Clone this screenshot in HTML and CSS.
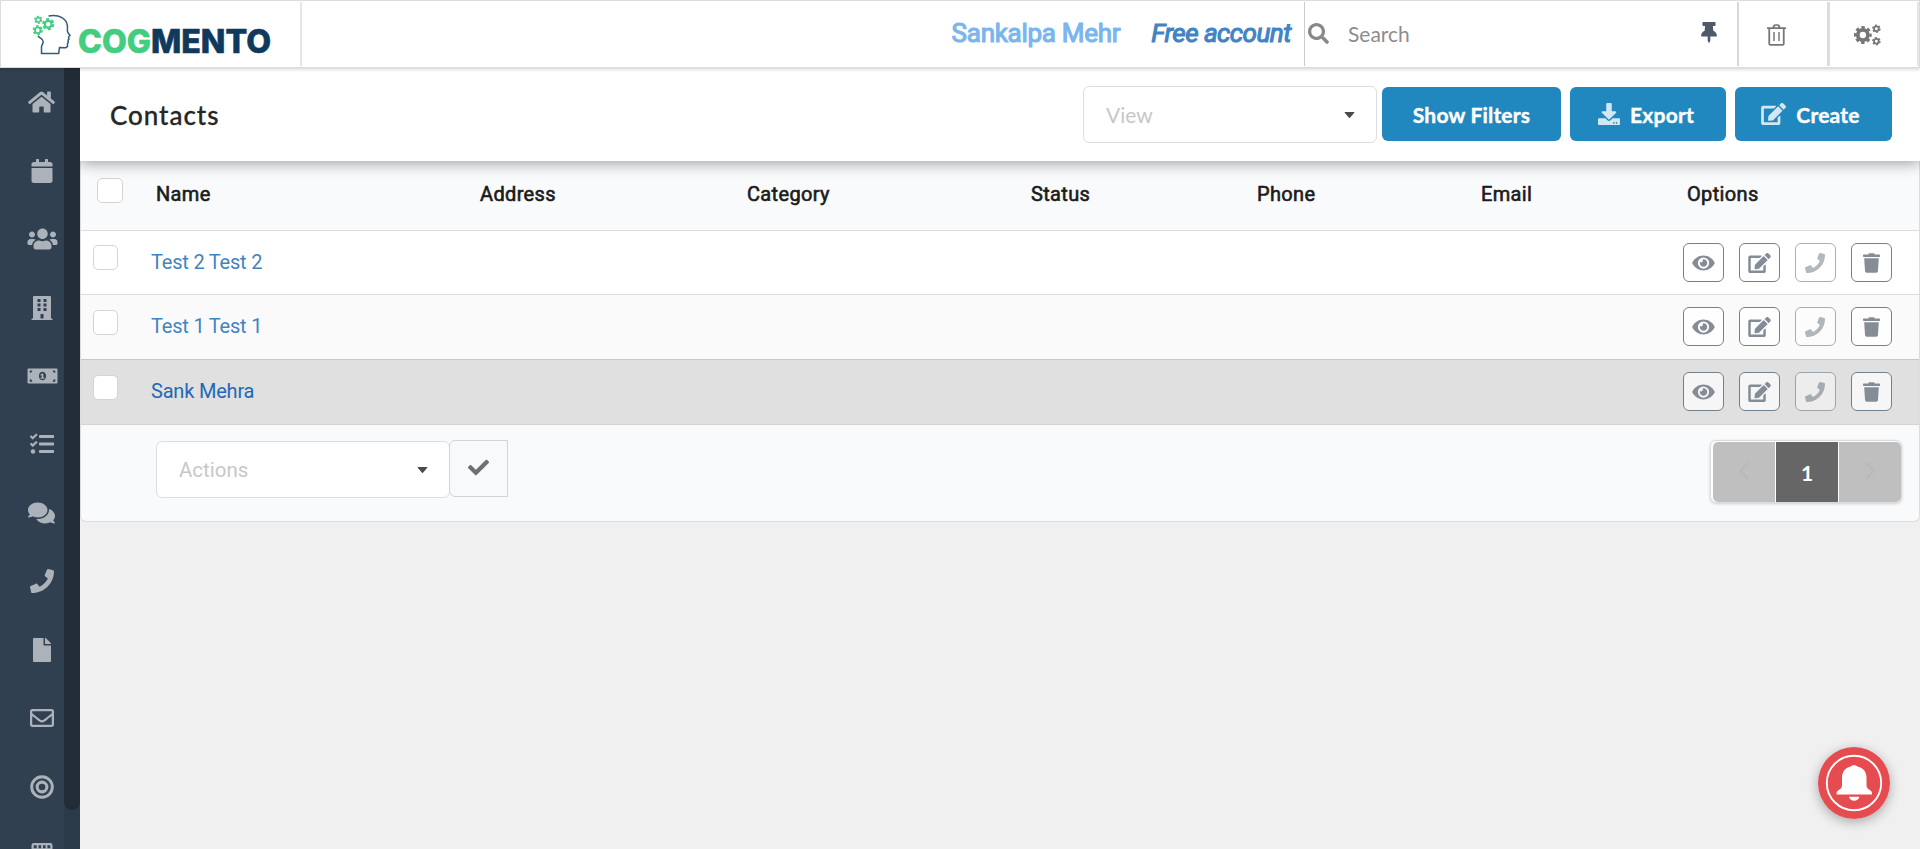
FILE: index.html
```html
<!DOCTYPE html>
<html lang="en">
<head>
<meta charset="utf-8">
<title>Cogmento CRM</title>
<link rel="stylesheet" href="styles.css">
</head>
<body>
<svg class="defs" width="0" height="0">
<symbol id="home" viewBox="0 0 576 512"><path d="M280.37 148.26L96 300.11V464a16 16 0 0 0 16 16l112.06-.29a16 16 0 0 0 15.92-16V368a16 16 0 0 1 16-16h64a16 16 0 0 1 16 16v95.64a16 16 0 0 0 16 16.05L464 480a16 16 0 0 0 16-16V300L295.67 148.26a12.19 12.19 0 0 0-15.3 0zM571.6 251.47L488 182.56V44.05a12 12 0 0 0-12-12h-56a12 12 0 0 0-12 12v72.61L318.47 43a48 48 0 0 0-61 0L4.34 251.47a12 12 0 0 0-1.6 16.9l25.5 31A12 12 0 0 0 45.15 301l235.22-193.74a12.19 12.19 0 0 1 15.3 0L530.9 301a12 12 0 0 0 16.9-1.6l25.5-31a12 12 0 0 0-1.7-16.93z"/></symbol>
<symbol id="calendar" viewBox="0 0 448 512"><path d="M12 192h424c6.6 0 12 5.4 12 12v260c0 26.5-21.5 48-48 48H48c-26.5 0-48-21.5-48-48V204c0-6.600 5.400-12 12-12zm436-44v-36c0-26.500-21.500-48-48-48h-48V12c0-6.600-5.400-12-12-12h-40c-6.600 0-12 5.400-12 12v52H160V12c0-6.600-5.400-12-12-12h-40c-6.600 0-12 5.400-12 12v52H48C21.500 64 0 85.500 0 112v36c0 6.600 5.400 12 12 12h424c6.600 0 12-5.400 12-12z"/></symbol>
<symbol id="users" viewBox="0 0 640 512"><path d="M96 224c35.300 0 64-28.700 64-64s-28.700-64-64-64-64 28.700-64 64 28.700 64 64 64zm448 0c35.300 0 64-28.700 64-64s-28.700-64-64-64-64 28.700-64 64 28.700 64 64 64zm32 32h-64c-17.600 0-33.500 7.100-45.100 18.600 40.300 22.100 68.900 62 75.100 109.400h66c17.700 0 32-14.300 32-32v-32c0-35.300-28.700-64-64-64zm-256 0c61.900 0 112-50.100 112-112S381.900 32 320 32 208 82.100 208 144s50.100 112 112 112zm76.800 32h-8.300c-20.800 10-43.900 16-68.500 16s-47.600-6-68.500-16h-8.300C179.600 288 128 339.600 128 403.200V432c0 26.500 21.500 48 48 48h288c26.500 0 48-21.500 48-48v-28.800c0-63.600-51.600-115.200-115.200-115.200zm-223.700-13.400C161.500 263.100 145.600 256 128 256H64c-35.300 0-64 28.700-64 64v32c0 17.700 14.300 32 32 32h65.900c6.300-47.400 34.900-87.300 75.200-109.400z"/></symbol>
<symbol id="building" viewBox="0 0 448 512"><path fill-rule="evenodd" d="M436 480h-20V24c0-13.300-10.700-24-24-24H56C42.700 0 32 10.700 32 24v456H12c-6.600 0-12 5.400-12 12v20h448v-20c0-6.600-5.400-12-12-12zM128 64h64v64h-64zM128 160h64v64h-64zM128 256h64v64h-64zM256 64h64v64h-64zM256 160h64v64h-64zM256 256h64v64h-64zM192 384h64v96h-64z"/></symbol>
<symbol id="money" viewBox="0 0 640 512"><path fill-rule="evenodd" d="M616 96H24C10.700 96 0 106.700 0 120v272c0 13.300 10.700 24 24 24h592c13.300 0 24-10.700 24-24V120c0-13.300-10.700-24-24-24zM48 136h56q-8 48-56 56zM536 136h56v56q-48-8-56-56zM48 320q48 8 56 56H48zM592 320v56h-56q8-48 56-56zM320 164c44 0 76 40 76 92s-32 92-76 92-76-40-76-92 32-92 76-92zm-8 40l-34 20v24l26-8v50h-24v22h78v-22h-20v-86z"/></symbol>
<symbol id="tasks" viewBox="0 0 512 512"><path d="M139.600 35.500a12 12 0 0 0-17 0L58.900 98.800l-22.700-22.100a12 12 0 0 0-17 0L3.500 92.400a12 12 0 0 0 0 17l47.600 47.400a12.800 12.800 0 0 0 17.600 0l15.600-15.600L156.500 69a12 12 0 0 0 .1-17zm0 159.200a12 12 0 0 0-17 0l-63.700 63.700-22.700-22.100a12 12 0 0 0-17 0L3.500 252a12 12 0 0 0 0 17L51 316.500a12.800 12.800 0 0 0 17.600 0l15.700-15.700 72.200-72.200a12 12 0 0 0 .1-17zM64 368c-26.500 0-48.600 21.500-48.600 48S37.500 464 64 464a48 48 0 0 0 0-96zm432 16H208a16 16 0 0 0-16 16v32a16 16 0 0 0 16 16h288a16 16 0 0 0 16-16v-32a16 16 0 0 0-16-16zm0-320H208a16 16 0 0 0-16 16v32a16 16 0 0 0 16 16h288a16 16 0 0 0 16-16V80a16 16 0 0 0-16-16zm0 160H208a16 16 0 0 0-16 16v32a16 16 0 0 0 16 16h288a16 16 0 0 0 16-16v-32a16 16 0 0 0-16-16z"/></symbol>
<symbol id="comments" viewBox="0 0 576 512"><path d="M416 192c0-88.400-93.100-160-208-160S0 103.600 0 192c0 34.300 14.100 65.900 38 92-13.400 30.200-35.500 54.200-35.800 54.500-2.200 2.300-2.800 5.700-1.500 8.700S4.800 352 8 352c36.600 0 66.900-12.300 88.700-25 32.200 15.700 70.300 25 111.300 25 114.900 0 208-71.600 208-160zm122 220c23.900-26 38-57.700 38-92 0-66.900-53.500-124.200-129.300-148.100.9 6.600 1.300 13.300 1.300 20.100 0 105.900-107.700 192-240 192-10.800 0-21.300-.8-31.700-1.900C207.800 439.600 281.800 480 368 480c41 0 79.100-9.200 111.300-25 21.800 12.700 52.100 25 88.700 25 3.200 0 6.100-1.900 7.300-4.800 1.300-2.900.7-6.300-1.500-8.700-.3-.3-22.400-24.200-35.800-54.500z"/></symbol>
<symbol id="phone" viewBox="0 0 512 512"><path d="M493.400 24.600l-104-24c-11.300-2.600-22.900 3.300-27.500 13.900l-48 112c-4.200 9.800-1.400 21.300 6.900 28l60.600 49.600c-36 76.700-98.900 140.500-177.200 177.200l-49.600-60.600c-6.800-8.300-18.200-11.100-28-6.900l-112 48C3.900 366.500-2 378.100.6 389.400l24 104C27.100 504.200 36.700 512 48 512c256.100 0 464-207.500 464-464 0-11.200-7.700-20.900-18.600-23.400z"/></symbol>
<symbol id="file" viewBox="0 0 384 512"><path d="M224 136V0H24C10.700 0 0 10.700 0 24v464c0 13.300 10.700 24 24 24h336c13.300 0 24-10.700 24-24V160H248c-13.200 0-24-10.800-24-24zm160-14.100v6.100H256V0h6.100c6.400 0 12.500 2.500 17 7l97.900 98c4.500 4.500 7 10.600 7 16.900z"/></symbol>
<symbol id="mail" viewBox="0 0 512 512"><path d="M464 64H48C21.490 64 0 85.490 0 112v288c0 26.510 21.490 48 48 48h416c26.510 0 48-21.490 48-48V112c0-26.510-21.490-48-48-48zm0 48v40.805c-22.422 18.259-58.168 46.651-134.587 106.490-16.841 13.247-50.201 45.072-73.413 44.701-23.208.375-56.579-31.459-73.413-44.701C106.180 199.465 70.425 171.067 48 152.805V112h416zM48 400V214.398c22.914 18.251 55.409 43.862 104.938 82.646 21.857 17.205 60.134 55.186 103.062 54.955 42.717.231 80.509-37.199 103.053-54.947 49.528-38.783 82.032-64.401 104.947-82.653V400H48z"/></symbol>
<symbol id="bullseye" viewBox="0 0 512 512"><g fill="none" stroke="currentColor" stroke-width="62"><circle cx="256" cy="256" r="220"/><circle cx="256" cy="256" r="104" stroke-width="66"/></g></symbol>
<symbol id="grid" viewBox="0 0 448 512"><path fill-rule="evenodd" d="M48 0h352q48 0 48 48v464H0V48Q0 0 48 0zM48 48v64h352V48zM48 176v64h80v-64zM180 176v64h88v-64zM320 176v64h80v-64z"/><path d="M110 40h40v80h-40zM205 40h40v80h-40zM300 40h40v80h-40z"/></symbol>
<symbol id="search" viewBox="0 0 512 512"><path d="M505 442.700L405.300 343c-4.500-4.500-10.600-7-17-7H372c27.600-35.300 44-79.700 44-128C416 93.100 322.900 0 208 0S0 93.100 0 208s93.100 208 208 208c48.300 0 92.700-16.400 128-44v16.300c0 6.400 2.500 12.500 7 17l99.700 99.700c9.400 9.400 24.600 9.400 33.900 0l28.300-28.300c9.400-9.400 9.400-24.600.1-34zM208 336c-70.700 0-128-57.200-128-128 0-70.700 57.200-128 128-128 70.700 0 128 57.200 128 128 0 70.700-57.200 128-128 128z"/></symbol>
<symbol id="pin" viewBox="0 0 384 512"><path d="M298.028 214.267L285.793 96H328c13.255 0 24-10.745 24-24V24c0-13.255-10.745-24-24-24H56C42.745 0 32 10.745 32 24v48c0 13.255 10.745 24 24 24h42.207L85.972 214.267C37.465 236.820 0 277.261 0 328c0 13.255 10.745 24 24 24h136v104.007c0 1.242.289 2.467.845 3.578l24 48c2.941 5.882 11.364 5.893 14.311 0l24-48a8.008 8.008 0 0 0 .845-3.578V352h136c13.255 0 24-10.745 24-24-.001-51.183-37.983-91.420-85.973-113.733z"/></symbol>
<symbol id="trash-o" viewBox="0 0 448 512"><path fill-rule="evenodd" d="M140 42Q150 0 190 0h68q40 0 50 42l10 32h118q12 0 12 12v16q0 12-12 12h-20v350q0 48-48 48H80q-48 0-48-48V114H12q-12 0-12-12V86q0-12 12-12h118zm38 32h92l-10-26q-3-8-12-8h-48q-9 0-12 8zM74 114v342q0 14 14 14h272q14 0 14-14V114z"/><path d="M148 184h34v216h-34zM266 184h34v216h-34z"/></symbol>
<symbol id="cogs" viewBox="0 0 640 512"><g fill="none" stroke="currentColor"><circle cx="210" cy="256" r="120" stroke-width="88"/><circle cx="210" cy="256" r="182" stroke-width="58" stroke-dasharray="82 60.940" stroke-dashoffset="41"/><circle cx="530" cy="108" r="56" stroke-width="42"/><circle cx="530" cy="108" r="84" stroke-width="36" stroke-dasharray="46 41.960"/><circle cx="530" cy="404" r="56" stroke-width="42"/><circle cx="530" cy="404" r="84" stroke-width="36" stroke-dasharray="46 41.960"/></g></symbol>
<symbol id="download" viewBox="0 0 512 512"><path d="M216 0h80c13.300 0 24 10.700 24 24v168h87.700c17.800 0 26.700 21.500 14.100 34.100L269.700 378.300c-7.500 7.500-19.800 7.500-27.300 0L90.100 226.100c-12.600-12.600-3.700-34.100 14.100-34.100H192V24c0-13.300 10.700-24 24-24zm296 376v112c0 13.300-10.700 24-24 24H24c-13.300 0-24-10.700-24-24V376c0-13.300 10.700-24 24-24h146.700l49 49c20.100 20.100 52.500 20.100 72.600 0l49-49H488c13.300 0 24 10.700 24 24zm-124 88c0-11-9-20-20-20s-20 9-20 20 9 20 20 20 20-9 20-20zm64 0c0-11-9-20-20-20s-20 9-20 20 9 20 20 20 20-9 20-20z"/></symbol>
<symbol id="edit" viewBox="0 0 576 512"><path d="M402.600 83.200l90.200 90.200c3.800 3.800 3.800 10 0 13.800L274.400 405.600l-92.800 10.300c-12.400 1.400-22.900-9.100-21.500-21.500l10.300-92.800L388.800 83.200c3.800-3.800 10-3.800 13.800 0zm162-22.900l-48.800-48.800c-15.200-15.200-39.900-15.200-55.200 0l-35.400 35.400c-3.800 3.800-3.800 10 0 13.800l90.200 90.200c3.800 3.800 10 3.800 13.800 0l35.400-35.400c15.200-15.300 15.200-40 0-55.200zM384 346.200V448H64V128h229.800c3.200 0 6.200-1.300 8.500-3.500l40-40c7.600-7.600 2.200-20.500-8.500-20.500H48C21.500 64 0 85.500 0 112v352c0 26.500 21.500 48 48 48h352c26.500 0 48-21.500 48-48V306.200c0-10.700-12.900-16-20.500-8.500l-40 40c-2.200 2.300-3.500 5.300-3.500 8.500z"/></symbol>
<symbol id="eye" viewBox="0 0 576 512"><path d="M572.520 241.400C518.290 135.590 410.930 64 288 64S57.680 135.640 3.480 241.410a32.350 32.350 0 0 0 0 29.190C57.710 376.410 165.070 448 288 448s230.320-71.640 284.520-177.410a32.350 32.350 0 0 0 0-29.190zM288 400a144 144 0 1 1 144-144 143.930 143.930 0 0 1-144 144zm0-240a95.310 95.310 0 0 0-25.310 3.790 47.850 47.850 0 0 1-66.900 66.900A95.780 95.780 0 1 0 288 160z"/></symbol>
<symbol id="trash" viewBox="0 0 448 512"><path d="M432 32H312l-9.400-18.700A24 24 0 0 0 281.100 0H166.800a23.720 23.720 0 0 0-21.400 13.300L136 32H16A16 16 0 0 0 0 48v32a16 16 0 0 0 16 16h416a16 16 0 0 0 16-16V48a16 16 0 0 0-16-16zM32 128l21.200 339a48 48 0 0 0 47.900 45h245.800a48 48 0 0 0 47.900-45L416 128z"/></symbol>
<symbol id="check" viewBox="0 0 512 512"><path d="M173.900 439.400L7.500 273c-10-10-10-26.200 0-36.200l36.200-36.200c10-10 26.200-10 36.200 0L192 312.700 432.100 72.600c10-10 26.200-10 36.200 0l36.200 36.200c10 10 10 26.200 0 36.200L210.100 439.400c-10 10-26.200 10-36.200 0z"/></symbol>
<symbol id="caret" viewBox="0 0 10 6"><path d="M0 .5Q0 0 .7 0h8.600q.7 0 .7.500L5.500 5.700q-.5.500-1 0z"/></symbol>
<symbol id="left" viewBox="0 0 10 18"><path d="M9 1L1.500 9 9 17" fill="none" stroke="currentColor" stroke-width="2"/></symbol>
<symbol id="right" viewBox="0 0 10 18"><path d="M1 1l7.500 8L1 17" fill="none" stroke="currentColor" stroke-width="2"/></symbol>
<symbol id="gear" viewBox="0 0 12 12"><g fill="none" stroke="currentColor"><circle cx="6" cy="6" r="3.200" stroke-width="2.100"/><circle cx="6" cy="6" r="4.900" stroke-width="2" stroke-dasharray="2.800 2.331"/></g></symbol>
</svg>

<header class="topbar">
  <div class="brand">
    <svg class="logo" width="242" height="46" viewBox="0 0 242 46">
      <g class="logo-green"><use href="#gear" x="2" y="2.500" width="8.500" height="8.500"/><use href="#gear" x="10" y="5" width="12.500" height="12.500"/><use href="#gear" x="0.500" y="12" width="10.500" height="10.500"/></g>
      <path class="logo-head" d="M16.500 3C27 1 35.500 5.500 35.500 14c0 2-.5 3.500.2 5.200l2.300 3.300-1.500 1.600.5 2-1 1.200.3 2-.8 1.200V33.500l-1.700 1.200-6.300-.2-.8 6H9.500V34c0-2 2-3.500 1.700-5.500-.3-2.800-3.800-3.500-5.200-5.500"/>
      <text class="logo-text" x="46" y="40" textLength="193" lengthAdjust="spacingAndGlyphs"><tspan class="green">COG</tspan><tspan class="navy">MENTO</tspan></text>
    </svg>
  </div>
  <div class="account"><span class="user">Sankalpa Mehr</span><em class="plan">Free account</em></div>
  <div class="search"><svg class="i-search"><use href="#search"/></svg><span>Search</span><svg class="i-pin"><use href="#pin"/></svg></div>
  <div class="tool tool-trash"><svg class="i-bin"><use href="#trash-o"/></svg></div>
  <div class="tool tool-cogs"><svg class="i-cogs"><use href="#cogs"/></svg></div>
</header>

<div class="layout">
  <nav class="sidebar">
    <div class="menu">
      <a><svg class="w576"><use href="#home"/></svg></a>
      <a><svg class="w448"><use href="#calendar"/></svg></a>
      <a class="wide"><svg class="w640"><use href="#users"/></svg></a>
      <a><svg class="w448"><use href="#building"/></svg></a>
      <a class="wide"><svg class="w640"><use href="#money"/></svg></a>
      <a><svg class="w512"><use href="#tasks"/></svg></a>
      <a><svg class="w576"><use href="#comments"/></svg></a>
      <a><svg class="w512"><use href="#phone"/></svg></a>
      <a><svg class="w384"><use href="#file"/></svg></a>
      <a><svg class="w512"><use href="#mail"/></svg></a>
      <a><svg class="w512"><use href="#bullseye"/></svg></a>
      <a><svg class="w448"><use href="#grid"/></svg></a>
    </div>
    <div class="track"><div class="thumb"></div></div>
  </nav>

  <main class="main">
    <div class="page-head">
      <h1>Contacts</h1>
      <div class="select"><span>View</span><svg><use href="#caret"/></svg></div>
      <button class="btn filters">Show Filters</button>
      <button class="btn export"><svg class="b512"><use href="#download"/></svg>Export</button>
      <button class="btn create"><svg class="b576"><use href="#edit"/></svg>Create</button>
    </div>

    <section class="table">
      <div class="row head">
        <div><i class="box"></i></div><div>Name</div><div>Address</div><div>Category</div><div>Status</div><div>Phone</div><div>Email</div><div>Options</div>
      </div>
      <div class="row r1">
        <div><i class="box"></i></div><a class="name">Test 2 Test 2</a>
        <div class="opts"><button><svg class="o576"><use href="#eye"/></svg></button><button><svg class="o576"><use href="#edit"/></svg></button><button class="off"><svg class="o512"><use href="#phone"/></svg></button><button><svg class="o448"><use href="#trash"/></svg></button></div>
      </div>
      <div class="row r2">
        <div><i class="box"></i></div><a class="name">Test 1 Test 1</a>
        <div class="opts"><button><svg class="o576"><use href="#eye"/></svg></button><button><svg class="o576"><use href="#edit"/></svg></button><button class="off"><svg class="o512"><use href="#phone"/></svg></button><button><svg class="o448"><use href="#trash"/></svg></button></div>
      </div>
      <div class="row r3">
        <div><i class="box"></i></div><a class="name">Sank Mehra</a>
        <div class="opts"><button><svg class="o576"><use href="#eye"/></svg></button><button><svg class="o576"><use href="#edit"/></svg></button><button class="off"><svg class="o512"><use href="#phone"/></svg></button><button><svg class="o448"><use href="#trash"/></svg></button></div>
      </div>
      <div class="foot">
        <div class="select actions"><span>Actions</span><svg><use href="#caret"/></svg></div>
        <button class="apply"><svg><use href="#check"/></svg></button>
        <div class="pager"><span><svg><use href="#left"/></svg></span><span class="current">1</span><span><svg><use href="#right"/></svg></span></div>
      </div>
    </section>
  </main>
</div>

<div class="bell">
  <svg width="72" height="72" viewBox="0 0 72 72"><circle cx="36" cy="36" r="36" fill="#e64b4f"/><circle cx="36" cy="36" r="27.200" fill="none" stroke="#fff" stroke-width="1.900"/><path fill="#fff" d="M32.500 19.500q3.500-3 7 0C45.500 21 48.500 25 48.500 31v7c0 3 1.500 4 4 5.500 1.300.8 1.500 1.800 1.500 4H18.500c0-2.200.2-3.200 1.500-4 2.500-1.500 4-2.500 4-5.500v-7c0-6 3-10 8.500-11.500zM31 49.700h10.400c-1 5.400-9.400 5.400-10.400 0z"/></svg>
</div>
</body>
</html>
```
FILE: styles.css
```css
* { box-sizing: border-box; }
body { margin: 0; height: 849px; overflow: hidden; background: #f0f0f0; font-family: Roboto, "Liberation Sans", sans-serif; }
svg { display: block; fill: currentColor; flex: none; }
.defs { position: absolute; }
button { margin: 0; padding: 0; font: inherit; }

.topbar { position: relative; z-index: 3; display: flex; height: 68px; padding: 1px 0; border: 1px solid #dcdcdc; background: #fff; box-shadow: 0 1px 4px rgba(0,0,0,.2); }
.brand { width: 301px; padding: 11px 0 0 31px; border-right: 2px solid #e6e6e6; }
.logo-green { color: #42cd80; }
.logo-head { fill: none; stroke: #375b7c; stroke-width: 1.500; }
.logo-text { font: 800 32px Inter, sans-serif; stroke-width: .6; }
.green { fill: #42cd80; stroke: #42cd80; }
.navy { fill: #0f3a5b; stroke: #0f3a5b; }
.account { flex: 1; display: flex; justify-content: flex-end; gap: 31px; padding: 14px 13px 0 0; font-size: 26px; line-height: 34px; }
.user { color: #7bb5ed; letter-spacing: -.28px; -webkit-text-stroke: 1.100px #7bb5ed; }
.plan { color: #4183c4; letter-spacing: -.5px; -webkit-text-stroke: 1.100px #4183c4; }
.search { display: flex; width: 433px; padding: 0 20px 0 3px; border-left: 1px solid #ccc; font: 21px/62px Lato, sans-serif; color: #8d8d8d; }
.search span { margin-left: 19px; flex: 1; padding-top: 1px; }
.i-search { width: 21px; height: 21px; margin-top: 21px; color: #888; }
.i-pin { width: 16px; height: 21px; margin-top: 20px; color: #4e5a67; }
.tool { border-left: 2px solid #d8d8d8; color: #767676; }
.tool-trash { width: 90px; padding: 22px 0 0 28px; }
.tool-cogs { width: 92px; padding: 22px 0 0 24px; border-left: 3px solid #ddd; border-right: 2px solid #e6e6e6; }
.i-bin { width: 19px; height: 22px; }
.i-cogs { width: 27px; height: 22px; }

.layout { display: flex; height: 781px; }
.sidebar { display: flex; width: 80px; background: #304050; }
.menu { width: 64px; height: 781px; overflow: hidden; color: #abb2b9; }
.menu a { display: flex; align-items: center; justify-content: center; width: 45px; height: 68.450px; margin-left: 19px; }
.menu a.wide { padding-left: 1px; }
.menu svg { height: 24px; }
.w384 { width: 18px; } .w448 { width: 22px; } .w512 { width: 24px; } .w576 { width: 27px; } .w640 { width: 31px; }
.track { width: 16px; background: #2b3b4a; }
.thumb { height: 742px; border-radius: 0 0 8px 8px; background: #222c36; }

.main { flex: 1; }
.page-head { position: relative; z-index: 2; display: flex; align-items: flex-start; height: 93px; padding: 18px 28px 0 30px; background: #fff; box-shadow: 0 2px 14px rgba(0,0,0,.38); clip-path: inset(0 0 -30px 0); }
h1 { flex: 1; margin: 0; padding-top: 10px; font: 500 26px/38px Lato, sans-serif; letter-spacing: .95px; color: #262626; -webkit-text-stroke: .3px #262626; }
.select { display: flex; align-items: center; justify-content: space-between; width: 294px; height: 57px; padding: 0 21px 0 22px; border: 1px solid #dedede; border-radius: 6px; background: #fff; font: 21px Lato, sans-serif; color: #c7c7c7; }
.select svg { width: 11px; height: 6px; color: #4a4a4a; }
.btn { display: flex; align-items: center; justify-content: center; height: 54px; margin: 1px 0 0 9px; border: 0; border-radius: 6px; background: #2088bf; color: #fff; font: 700 21px Lato, sans-serif; letter-spacing: .2px; -webkit-text-stroke: .4px #fff; }
.btn.filters { width: 179px; margin-left: 5px; }
.btn.export { width: 156px; padding-right: 4px; }
.btn.create { width: 157px; padding-right: 6px; }
.btn svg { height: 22px; margin-right: 10px; opacity: .8; }
.b512 { width: 22px; } .b576 { width: 25px; }

.table { height: 361px; border: 1px solid #dcdcdc; border-top: 0; border-radius: 0 0 6px 6px; background: #f9fafb; overflow: hidden; }
.row { display: grid; grid-template-columns: 59px 324px 267px 284px 226px 224px 206px 1fr; height: 65px; border-bottom: 1px solid #ddd; }
.box { display: block; width: 25px; height: 25px; margin: 15px 0 0 12px; border: 1px solid #d4d4d5; border-radius: 5px; background: #fff; }
.head { height: 70px; padding-top: 17px; font-size: 20px; line-height: 32px; letter-spacing: .35px; color: #1c1c1c; -webkit-text-stroke: .6px #1c1c1c; }
.head div { padding-left: 16px; }
.head div:first-child { padding: 0; }
.head .box { width: 26px; margin: 0 0 0 16px; }
.r1 { height: 64px; background: #fff; }
.r2 { background: #fafafa; border-color: #c8c8c8; }
.r3 { background: #e0e0e0; border-color: #d4d4d5; }
.r3 .name { color: #2368b7; }
.r1 .box { margin-top: 14px; }
.name { padding: 15px 0 0 11px; font-size: 20px; line-height: 32px; letter-spacing: -.2px; color: #4183c4; }
.opts { grid-column: 8; display: flex; gap: 15px; padding: 12px 0 0 12px; }
.opts button { display: flex; align-items: center; justify-content: center; width: 41px; height: 39px; border: 1px solid #74808c; border-radius: 6px; background: rgba(255,255,255,.7); color: #848d97; }
.opts .off { opacity: .62; }
.opts svg { height: 20px; margin-right: 1px; }
.o448 { width: 17px; } .o512 { width: 20px; } .o576 { width: 23px; }

.foot { display: flex; align-items: flex-start; padding: 16px 17px 0 75px; }
.actions { font-family: Roboto, sans-serif; font-size: 20.500px; }
.apply { display: flex; align-items: center; justify-content: center; width: 59px; height: 57px; margin: -1px 0 0 -1px; border: 1px solid #d4d4d5; border-radius: 6px 0 0 6px; background: #f8f9fa; color: #707070; }
.apply svg { width: 21px; height: 21px; margin-bottom: 2px; }
.pager { display: flex; gap: 1px; margin: -1px 0 0 auto; height: 63px; padding: 1px 0 0 2px; border: 1px solid #dcdcdc; border-radius: 6px; background: #fff; box-shadow: 0 1px 3px rgba(34,36,38,.2); }
.pager span { display: flex; align-items: center; justify-content: center; width: 62px; background: #bfbfbf; color: #b8b8b8; }
.pager span:first-child { border-radius: 5px 0 0 5px; }
.pager span:last-child { border-radius: 0 5px 5px 0; }
.pager .current { background: #666; color: #fff; font: 700 21px Lato, sans-serif; }
.pager svg { width: 10px; height: 18px; margin-bottom: 3px; }

.bell { position: absolute; left: 1818px; top: 747px; width: 72px; height: 72px; border-radius: 50%; box-shadow: 0 3px 12px rgba(0,0,0,.3); }
```
